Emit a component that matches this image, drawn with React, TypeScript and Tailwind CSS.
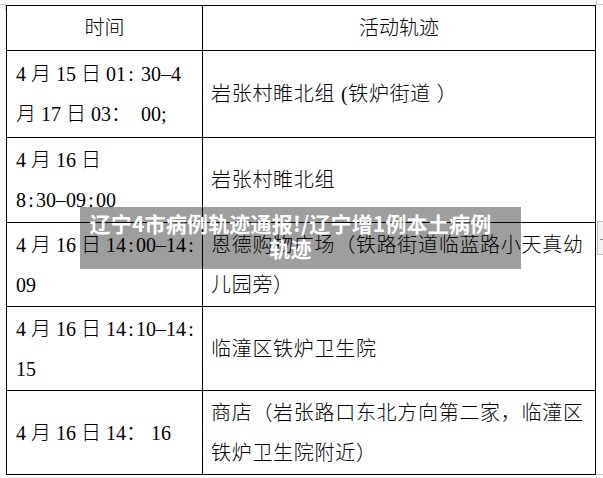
import React from "react";

function T({ s }: { s: string }) {
  const parts = s.split(":");
  return (
    <>
      {parts.map((p, i) => (
        <React.Fragment key={i}>
          {p}
          {i < parts.length - 1 && (
            <span className="inline-block w-[10px] text-center">:</span>
          )}
        </React.Fragment>
      ))}
    </>
  );
}

function Lines({ lines }: { lines: string[] }) {
  return (
    <div className="flex flex-col">
      {lines.map((l, i) => (
        <div key={i} className="whitespace-pre h-[40px] leading-[40px]">
          <T s={l} />
        </div>
      ))}
    </div>
  );
}

const rows: { h: string; left: string[]; right: string[] }[] = [
  { h: "h-[87px] border-b", left: ["4 月 15 日 01: 30–4", "月 17 日 03：  00;"], right: ["岩张村睢北组 (铁炉街道 ）"] },
  { h: "h-[85px] border-b", left: ["4 月 16 日", "8:30–09:00"], right: ["岩张村睢北组"] },
  { h: "h-[84px] border-b", left: ["4 月 16 日 14:00–14:", "09"], right: ["恩德购物广场（铁路街道临蓝路小天真幼", "儿园旁）"] },
  { h: "h-[84px] border-b", left: ["4 月 16 日 14:10–14:", "15"], right: ["临潼区铁炉卫生院"] },
  { h: "h-[83px]", left: ["4 月 16 日 14： 16"], right: ["商店（岩张路口东北方向第二家，临潼区", "铁炉卫生院附近）"] },
];

export default function App() {
  return (
    <div className="relative w-[603px] h-[478px] bg-white overflow-hidden text-black font-['Liberation_Serif','Noto_Sans_CJK_SC',serif] text-[20px] font-light">
      <div className="pt-[5px] pl-[6px]">
        <div className="w-[590px] border border-black flex flex-col">
          <div className="flex h-[45px] border-b border-black">
            <div className="w-[195px] flex items-center justify-center">时间</div>
            <div className="flex-1 border-l border-black flex items-center justify-center">活动轨迹</div>
          </div>
          {rows.map((r, i) => (
            <div key={i} className={`flex border-black ${r.h}`}>
              <div className="w-[195px] flex items-center pl-[9px]">
                <Lines lines={r.left} />
              </div>
              <div className="flex-1 border-l border-black flex items-center pl-[8px] tracking-[0.7px]">
                <Lines lines={r.right} />
              </div>
            </div>
          ))}
        </div>
      </div>

      {/* page boundary marks */}
      <div className="absolute left-0 top-[4px] w-[6px] h-px bg-[#c8c8c8]" />
      <div className="absolute left-[5px] top-[5px] w-px h-[5px] bg-[#c8c8c8]" />
      <div className="absolute left-[596px] top-0 w-px h-[5px] bg-[#c8c8c8]" />
      <div className="absolute left-[597px] top-[4px] w-[6px] h-px bg-[#c8c8c8]" />
      <div className="absolute left-[596px] top-[475px] w-px h-[3px] bg-[#c8c8c8]" />
      <div className="absolute left-[597px] top-[474px] w-[6px] h-px bg-[#c8c8c8]" />
      <div className="absolute left-[597px] top-[221px] w-[6px] h-[34px] border-l border-t border-b border-[#bdbdbd] bg-[#f3f3f3]" />
      <div className="absolute left-[600px] top-[239px] w-[3px] h-px bg-[#888]" />

      {/* title overlay */}
      <div className="absolute left-[80px] top-[207px] w-[441px] h-[62px] bg-black/[0.38] pt-[4px] pr-[20px] text-center text-white font-bold text-[21px] leading-[25px] tracking-[0.2px] whitespace-nowrap font-['Noto_Sans_CJK_SC','Noto_Sans',sans-serif]">
        辽宁4市病例轨迹通报!/辽宁增1例本土病例
        <br />
        轨迹
      </div>
    </div>
  );
}
